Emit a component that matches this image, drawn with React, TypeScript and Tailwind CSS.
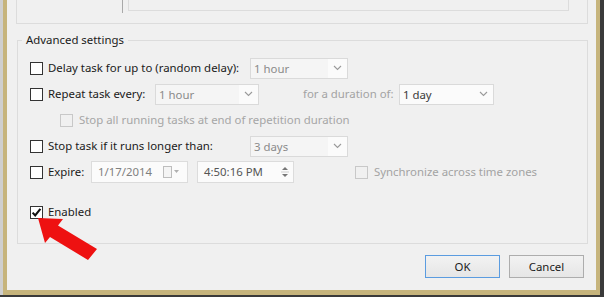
import clsx from 'clsx';

function CheckBox({ checked, disabled }: { checked?: boolean; disabled?: boolean }) {
  return (
    <span
      className={clsx(
        'flex h-[13px] w-[13px] shrink-0 items-center justify-center border',
        disabled ? 'border-[#c8c8c8] bg-[#f0f0f0]' : 'border-[#333333] bg-white'
      )}
    >
      {checked && (
        <svg width="11" height="11" viewBox="0 0 11 11">
          <path d="M1.6 5.6 L4.2 8.4 L9.4 1.9" stroke="#111" strokeWidth="2.1" fill="none" />
        </svg>
      )}
    </span>
  );
}

function Chevron() {
  return (
    <svg width="9" height="6" viewBox="0 0 9 6">
      <path d="M1 1 L4.5 4.5 L8 1" stroke="#9a9a9a" strokeWidth="1.1" fill="none" />
    </svg>
  );
}

function Combo({ value, className, dark }: { value: string; className: string; dark?: boolean }) {
  return (
    <div className={clsx('flex h-[21px] shrink-0 border border-[#dadada] bg-[#f5f5f5]', className)}>
      <span className={clsx('flex-1 pl-[3px] leading-[19px]', dark ? 'text-[#3a3a3a]' : 'text-[#8a8a8a]')}>
        {value}
      </span>
      <span className="flex w-[19px] items-center justify-center bg-[#fbfbfb]">
        <Chevron />
      </span>
    </div>
  );
}

export default function App() {
  return (
    <div className="relative flex h-[297px] w-[604px] bg-[#3a3a3a] text-[11.4px] text-[#1a1a1a] font-['Noto_Sans',sans-serif]">
      <div className="h-[295px] w-[3px] bg-[#cfcfcf]" />
      <div className="flex h-[295px] w-[597px] flex-col border-x-4 border-b-[5px] border-[#c6b47c] bg-[#f0f0f0]">
        {/* bottom of the previous group */}
        <div className="ml-[9px] mr-[8px] flex h-[24px] shrink-0 items-start border-x border-b border-[#dcdcdc]">
          <div className="ml-[105px] h-[13px] w-px bg-[#a9a9a9]" />
          <div className="ml-[5px] h-[11px] w-[441px] border-x border-b border-[#dcdcdc]" />
        </div>

        <fieldset className="ml-[10px] mr-[8px] mt-[8px] border border-[#dcdcdc] pb-[18px]">
          <legend className="ml-[4px] px-[4px] leading-[16px]">Advanced settings</legend>

          <div className="flex flex-col pl-[12px] pt-[7px]">
            <div className="flex h-[26px] items-center">
              <CheckBox />
              <span className="ml-[5px] w-[202px]">Delay task for up to (random delay):</span>
              <Combo value="1 hour" className="w-[98px]" />
            </div>

            <div className="flex h-[26px] items-center">
              <CheckBox />
              <span className="ml-[5px] w-[107px]">Repeat task every:</span>
              <Combo value="1 hour" className="w-[104px]" />
              <span className="ml-[44px] w-[96px] text-[#a3a3a3]">for a duration of:</span>
              <Combo value="1 day" className="w-[95px] bg-[#fbfbfb]" dark />
            </div>

            <div className="flex h-[26px] items-center pl-[30px]">
              <CheckBox disabled />
              <span className="ml-[6px] text-[#a6a6a6]">Stop all running tasks at end of repetition duration</span>
            </div>

            <div className="flex h-[26px] items-center">
              <CheckBox />
              <span className="ml-[5px] w-[202px]">Stop task if it runs longer than:</span>
              <Combo value="3 days" className="w-[98px]" />
            </div>

            <div className="flex h-[26px] items-center">
              <CheckBox />
              <span className="ml-[5px] w-[43px]">Expire:</span>
              <div className="flex h-[22px] w-[97px] items-center border border-[#dcdcdc] bg-[#fbfbfb]">
                <span className="flex-1 pl-[6px] text-[#808080]">1/17/2014</span>
                <svg width="20" height="12" viewBox="0 0 20 12" className="mr-[5px]">
                  <rect x="1.5" y="0.5" width="8" height="11" fill="#f4f4f4" stroke="#bdbdbd" />
                  <path d="M12 4 L17 4 L14.5 7 Z" fill="#b0b0b0" />
                </svg>
              </div>
              <div className="ml-[9px] flex h-[22px] w-[97px] items-center border border-[#dcdcdc] bg-[#fbfbfb]">
                <span className="flex-1 pl-[6px] text-[#555555]">4:50:16 PM</span>
                <svg width="8" height="16" viewBox="0 0 8 16" className="mr-[4px]">
                  <path d="M1 6 L4 3 L7 6 Z" fill="#777" />
                  <path d="M0 8 L8 8" stroke="#cfcfcf" />
                  <path d="M1 10 L4 13 L7 10 Z" fill="#777" />
                </svg>
              </div>
              <div className="ml-[61px]">
                <CheckBox disabled />
              </div>
              <span className="ml-[6px] text-[#a3a3a3]">Synchronize across time zones</span>
            </div>

            <div className="mt-[14px] flex h-[26px] items-center">
              <CheckBox checked />
              <span className="ml-[5px]">Enabled</span>
            </div>
          </div>
        </fieldset>

        <div className="flex justify-end gap-[9px] pr-[12px] pt-[11px]">
          <button className="h-[23px] w-[75px] border border-[#5b9ce0] bg-gradient-to-b from-[#f2f2f2] to-[#e6e6e6] text-[#1a1a1a]">
            OK
          </button>
          <button className="h-[23px] w-[75px] border border-[#adadad] bg-gradient-to-b from-[#f2f2f2] to-[#e6e6e6] text-[#1a1a1a]">
            Cancel
          </button>
        </div>
      </div>
      <div className="h-[297px] w-[4px] bg-[#3a3a3a]" />

      {/* red arrow pointing at the Enabled checkbox */}
      <svg className="pointer-events-none absolute left-0 top-0" width="604" height="297" viewBox="0 0 604 297">
        <polygon points="38,218 63,219 58,225.5 97,249 88,260 50,237 45,243" fill="#ee1111" />
      </svg>
    </div>
  );
}
